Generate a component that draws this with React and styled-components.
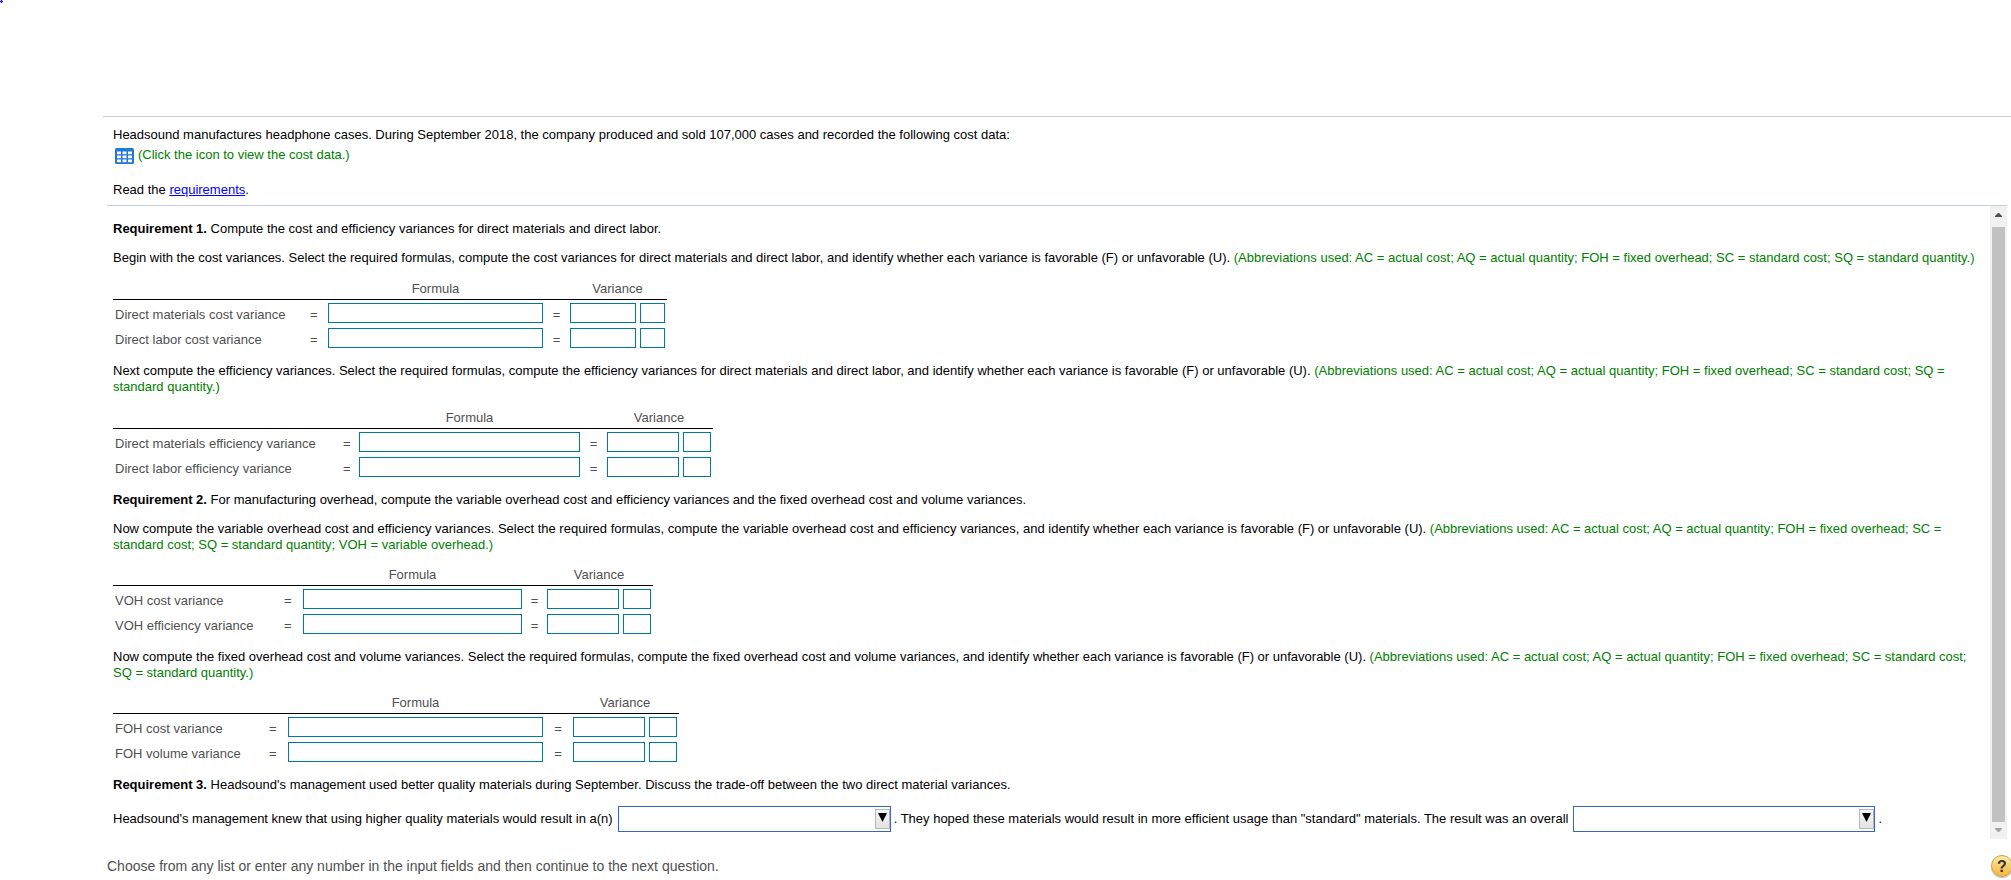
import React from 'react';
import styled, { createGlobalStyle } from 'styled-components';

const ABBR = "(Abbreviations used: AC = actual cost; AQ = actual quantity; FOH = fixed overhead; SC = standard cost; SQ = standard quantity";

const tables = {
  cost: {rows: ["Direct materials cost variance", "Direct labor cost variance"], cols: "188px 27px 215px 27px 66px 25px", width: 554, gap: 15},
  efficiency: {rows: ["Direct materials efficiency variance", "Direct labor efficiency variance"], cols: "221px 25px 221px 27px 72px 28px", width: 600, gap: 15},
  voh: {rows: ["VOH cost variance", "VOH efficiency variance"], cols: "162px 28px 219px 25px 72px 28px", width: 540, gap: 14},
  foh: {rows: ["FOH cost variance", "FOH volume variance"], cols: "147px 28px 255px 30px 72px 28px", width: 566, gap: 14},
};

const VarianceTable = ({ table }) => (
  <Table $width={table.width} $gap={table.gap}>
    <HeadRow $cols={table.cols}>
      <FormulaHead>Formula</FormulaHead>
      <VarianceHead>Variance</VarianceHead>
    </HeadRow>
    {table.rows.map((label) => (
      <Row key={label} $cols={table.cols}>
        <Label>{label}</Label>
        <Equals $first>=</Equals>
        <Field />
        <Equals>=</Equals>
        <Field />
        <LastField />
      </Row>
    ))}
  </Table>
);

const Dropdown = ({ width }) => (
  <Select $width={width}>
    <SelectButton>
      <svg width="9" height="9" viewBox="0 0 9 9"><path d="M0 0h9L4.5 9z" fill="#000" /></svg>
    </SelectButton>
  </Select>
);

const TableIcon = () => (
  <svg width="19" height="16" viewBox="0 0 19 16">
    <rect width="19" height="16" rx="1.5" fill="#2277dd" />
    <g fill="#fff">
      {[3.5, 7.5, 11.5].map((y) => [2, 7.5, 13].map((x) => <rect key={`${x}-${y}`} x={x} y={y} width="4" height="2.7" />))}
    </g>
  </svg>
);

const App = () => {
  return (<>
    <GlobalStyle />
    <Page>
      <Cursor width="3" height="3" viewBox="0 0 3 3">
        <rect width="3" height="3" fill="#c8c8ff" />
        <path d="M1 0h1v1h1v1H2v1H1V2H0V1h1z" fill="#2020e8" />
      </Cursor>
      <Intro>
        <p>Headsound manufactures headphone cases. During September 2018, the company produced and sold 107,000 cases and recorded the following cost data:</p>
        <IconLine>
          <TableIcon />
          <Hint>(Click the icon to view the cost data.)</Hint>
        </IconLine>
        <p>Read the <Link href="#requirements">requirements</Link>.</p>
      </Intro>
      <Panel>
        <Content>
          <Requirement $top={15}><b>Requirement 1.</b> Compute the cost and efficiency variances for direct materials and direct labor.</Requirement>
          <Text>
            Begin with the cost variances. Select the required formulas, compute the cost variances for direct materials and direct labor, and identify whether each variance is favorable (F) or unfavorable (U). <Hint>{`${ABBR}.)`}</Hint>
          </Text>
          <VarianceTable table={tables.cost} />
          <Text $top={10}>
            Next compute the efficiency variances. Select the required formulas, compute the efficiency variances for direct materials and direct labor, and identify whether each variance is favorable (F) or unfavorable (U). <Hint>{`${ABBR}.)`}</Hint>
          </Text>
          <VarianceTable table={tables.efficiency} />
          <Requirement><b>Requirement 2.</b> For manufacturing overhead, compute the variable overhead cost and efficiency variances and the fixed overhead cost and volume variances.</Requirement>
          <Text>
            Now compute the variable overhead cost and efficiency variances. Select the required formulas, compute the variable overhead cost and efficiency variances, and identify whether each variance is favorable (F) or unfavorable (U). <Hint>{`${ABBR}; VOH = variable overhead.)`}</Hint>
          </Text>
          <VarianceTable table={tables.voh} />
          <Text $top={10}>
            Now compute the fixed overhead cost and volume variances. Select the required formulas, compute the fixed overhead cost and volume variances, and identify whether each variance is favorable (F) or unfavorable (U). <Hint>{`${ABBR}.)`}</Hint>
          </Text>
          <VarianceTable table={tables.foh} />
          <Requirement><b>Requirement 3.</b> Headsound's management used better quality materials during September. Discuss the trade-off between the two direct material variances.</Requirement>
          <AnswerRow>
            <span>Headsound's management knew that using higher quality materials would result in a(n)</span>
            <Dropdown width={273} />
            <span>. They hoped these materials would result in more efficient usage than "standard" materials. The result was an overall</span>
            <Dropdown width={302} />
            <span>.</span>
          </AnswerRow>
        </Content>
        <Scrollbar>
          <svg width="7" height="4" viewBox="0 0 7 4"><path d="M3 0h1l3 3v1H0V3z" fill="#505050" /></svg>
          <Thumb />
          <svg width="7" height="4" viewBox="0 0 7 4"><path d="M0 0h7v1L4 4H3L0 1z" fill="#a3a3a3" /></svg>
        </Scrollbar>
      </Panel>
      <Footer>
        <span>Choose from any list or enter any number in the input fields and then continue to the next question.</span>
        <Help>?</Help>
      </Footer>
    </Page>
  </>);
}

const GlobalStyle = createGlobalStyle`
  * {
    box-sizing: border-box;
  }
  body {
    margin: 0;
    background: #fff;
    color: #000;
    font: 13px/16px "Liberation Sans", Arial, sans-serif;
    overflow: hidden;
  }
  p {
    margin: 0;
  }
  svg {
    display: block;
    flex: none;
  }`;

const Page = styled.div`
  height: 880px;
  padding: 116px 0 0 103px;
  overflow: hidden;
`;

const Cursor = styled.svg`
  position: absolute;
  top: 0;
  left: 0;
`;

const Intro = styled.div`
  height: 89px;
  padding: 10px 0 0 10px;
  border-top: 1px solid #c6cedd;
`;

const IconLine = styled.div`
  display: flex;
  gap: 4px;
  height: 35px;
  padding: 5px 0 0 2px;
  margin-bottom: 4px;

  span {
    margin-top: -1px;
  }
`;

const Hint = styled.span`
  color: #008000;
`;

const Link = styled.a`
  color: #0000ff;
`;

const Panel = styled.div`
  display: flex;
  width: 1900px;
  height: 634px;
  margin-left: 4px;
  border-top: 1px solid #c6cedd;
`;

const Content = styled.div`
  flex: 1;
  padding: 0 10px 0 6px;
`;

const Text = styled.p`
  margin-top: ${({ $top = 13 }) => $top}px;
`;

const Requirement = styled.p`
  margin-top: ${({ $top = 10 }) => $top}px;
`;

const Table = styled.div`
  display: flex;
  flex-direction: column;
  width: ${({ $width }) => $width}px;
  margin-top: ${({ $gap }) => $gap}px;
  color: #505050;
`;

const HeadRow = styled.div`
  display: grid;
  grid-template-columns: ${({ $cols }) => $cols};
  height: 19px;
  margin-bottom: 3px;
  border-bottom: 1px solid #000;
  text-align: center;
`;

const FormulaHead = styled.div`
  grid-column: 3;
`;

const VarianceHead = styled.div`
  grid-column: 5 / span 2;
  padding-left: 4px;
`;

const Row = styled.div`
  display: grid;
  grid-template-columns: ${({ $cols }) => $cols};
  height: 20px;
  margin-bottom: 5px;
  line-height: 24px;
`;

const Label = styled.div`
  padding-left: 2px;
  white-space: nowrap;
`;

const Equals = styled.div`
  padding-left: ${({ $first }) => ($first ? 9 : 0)}px;
  text-align: ${({ $first }) => ($first ? 'left' : 'center')};
`;

const Field = styled.div`
  height: 20px;
  border: 1px solid #007a99;
`;

const LastField = styled(Field)`
  margin-left: 4px;
  margin-right: -4px;
`;

const AnswerRow = styled.div`
  display: flex;
  align-items: center;
  height: 26px;
  margin-top: 13px;
  white-space: pre;
`;

const Select = styled.div`
  display: flex;
  flex: none;
  justify-content: flex-end;
  width: ${({ $width }) => $width}px;
  height: 26px;
  margin: 0 3px 0 5px;
  padding-top: 2px;
  border: 1px solid #3366cc;
`;

const SelectButton = styled.div`
  display: flex;
  justify-content: center;
  width: 15px;
  height: 20px;
  padding-top: 3px;
  border: 1px solid #b8b8b8;
  background: linear-gradient(#f6f6f6, #e2e2e2);
`;

const Scrollbar = styled.div`
  display: flex;
  flex-direction: column;
  align-items: center;
  justify-content: space-between;
  width: 17px;
  padding: 7px 0;
  background: #f1f1f1;
`;

const Thumb = styled.div`
  width: 13px;
  height: 595px;
  margin-top: 4px;
  background: #c1c1c1;
`;

const Footer = styled.div`
  display: flex;
  justify-content: space-between;
  padding-left: 4px;
  margin-top: 16px;
  margin-right: -2px;
  color: #505050;
  font-size: 14px;

  span {
    margin-top: 3px;
  }
`;

const Help = styled.div`
  width: 22px;
  height: 22px;
  border: 1px solid #c9a04c;
  border-radius: 50%;
  background: linear-gradient(#fce9a6, #f3b53a);
  box-shadow: 0 1px 1px #bbb;
  color: #333;
  font-size: 16px;
  font-weight: bold;
  line-height: 21px;
  text-align: center;
`;

export default App;
